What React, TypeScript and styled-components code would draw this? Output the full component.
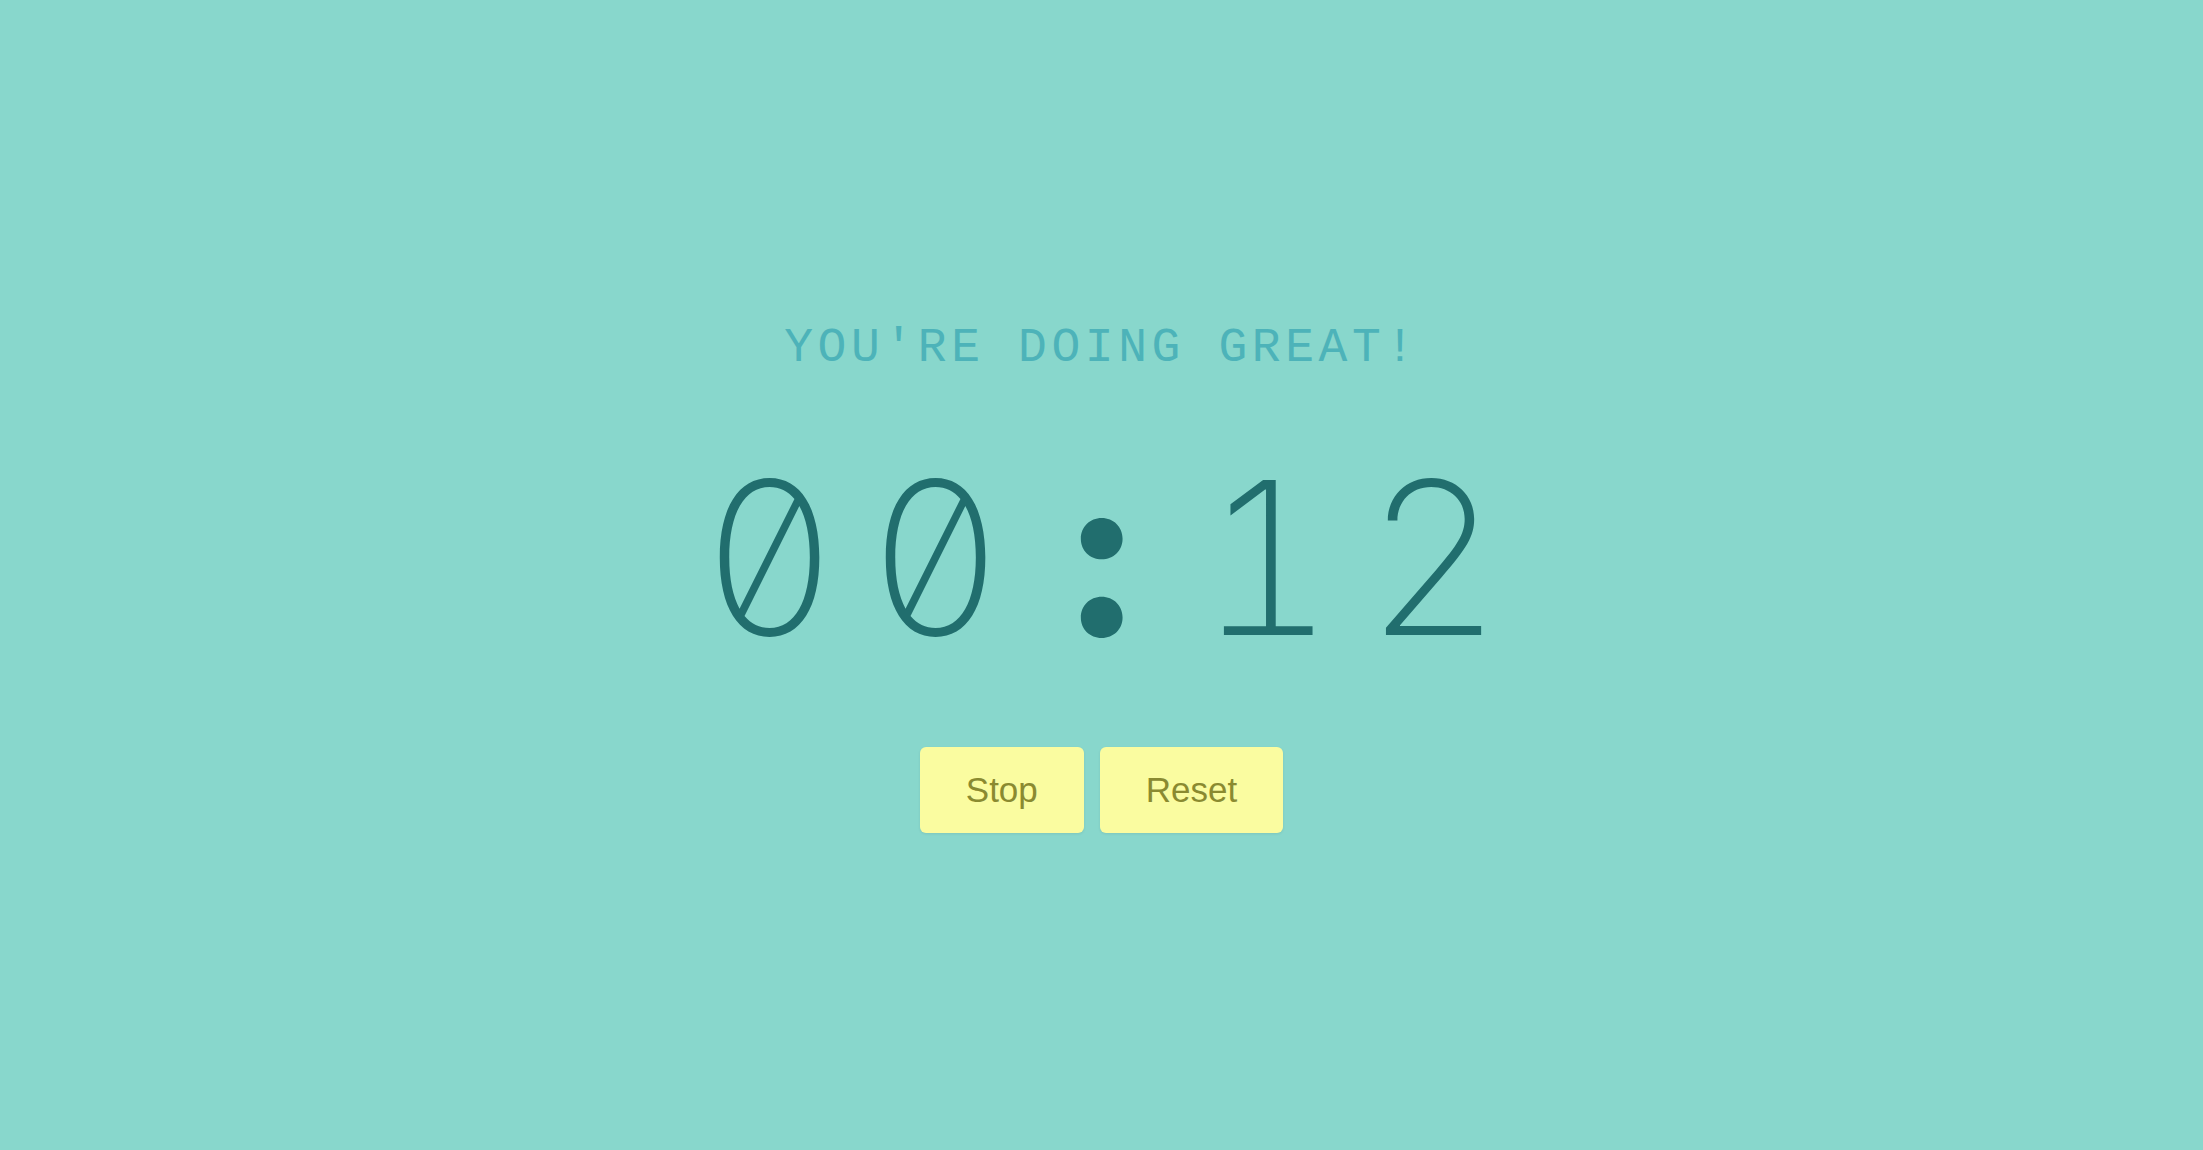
import React from "react";
import styled, { createGlobalStyle } from "styled-components";

const GlobalStyle = createGlobalStyle`
  html, body {
    margin: 0;
    padding: 0;
    background: #88d7cc;
  }
`;

const Page = styled.main`
  box-sizing: border-box;
  min-height: 100vh;
  padding-top: 6px;
  display: flex;
  flex-direction: column;
  align-items: center;
  justify-content: center;
  background: #88d7cc;
`;

const Message = styled.h1`
  margin: 0;
  font-family: "Liberation Mono", "DejaVu Sans Mono", monospace;
  font-weight: 400;
  font-size: 48px;
  letter-spacing: 4.6px;
  color: #4db3b9;
  line-height: 1;
`;

const Clock = styled.div`
  margin-top: 98px;
  height: 175px;
  display: flex;
  align-items: center;
  font-family: "Inter", "Liberation Sans", sans-serif;
  font-weight: 200;
  font-size: 213px;
  line-height: 1;
  color: #216e6e;
  font-feature-settings: "tnum", "zero";
`;

const Digit = styled.span<{ $separator?: boolean }>`
  width: 166px;
  text-align: center;
  font-weight: ${(p) => (p.$separator ? 800 : 200)};
  font-size: ${(p) => (p.$separator ? "226px" : "inherit")};
  transform: ${(p) => (p.$separator ? "translateY(-3px)" : "none")};
`;

const Controls = styled.div`
  margin-top: 102px;
  display: flex;
  gap: 16px;
`;

const Button = styled.button`
  border: none;
  border-radius: 6px;
  background: #fafca0;
  color: #8a8a30;
  font-family: "Liberation Sans", Arial, sans-serif;
  font-size: 35px;
  line-height: 40px;
  padding: 23px 46px;
  cursor: pointer;
  box-shadow: 0 1px 3px rgba(0, 0, 0, 0.08);
`;

export default function App() {
  const time = "00:12";
  return (
    <>
      <GlobalStyle />
      <Page>
        <Message>YOU'RE DOING GREAT!</Message>
        <Clock>
          {time.split("").map((c, i) => (
            <Digit key={i} $separator={c === ":"}>
              {c}
            </Digit>
          ))}
        </Clock>
        <Controls>
          <Button>Stop</Button>
          <Button>Reset</Button>
        </Controls>
      </Page>
    </>
  );
}
